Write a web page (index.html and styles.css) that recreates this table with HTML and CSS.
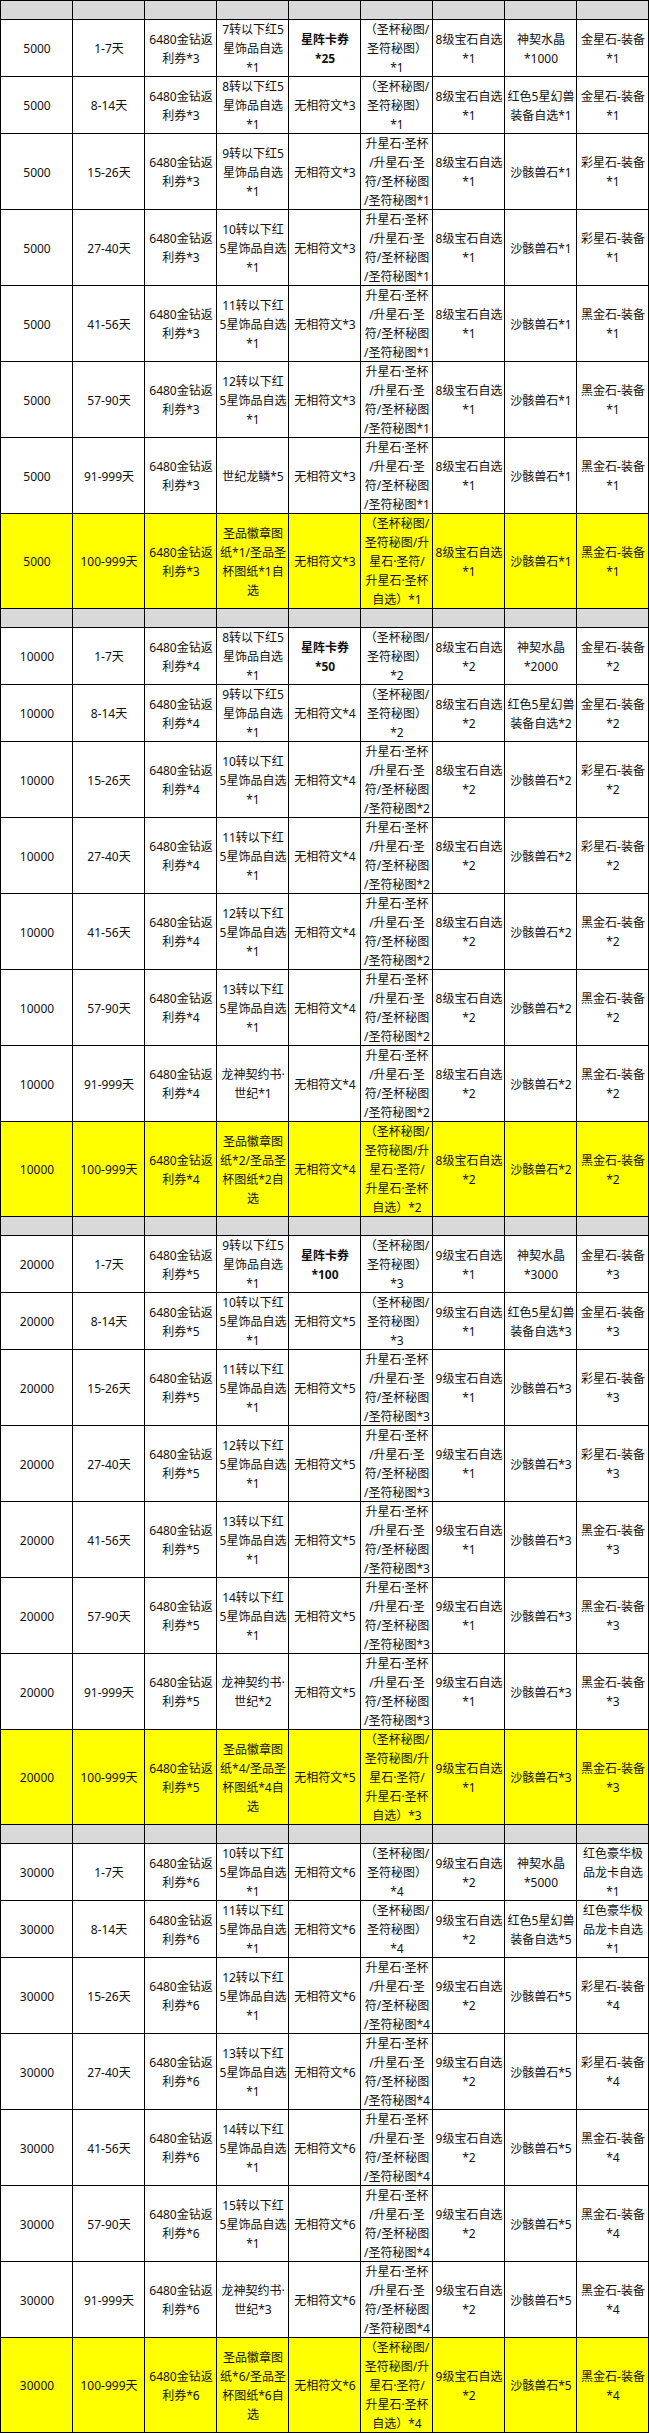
FILE: index.html
```html
<!DOCTYPE html>
<html lang="zh-CN">
<head>
<meta charset="utf-8">
<title>奖励表</title>
<link rel="stylesheet" href="styles.css">
</head>
<body>
<table class="rewards">
<tbody>
<tr class="gap"><td></td><td></td><td></td><td></td><td></td><td></td><td></td><td></td><td></td></tr>
<tr><td>5000</td><td>1-7天</td><td>6480金钻返<br>利券*3</td><td>7转以下红5<br>星饰品自选<br>*1</td><td class="b">星阵卡券<br>*25</td><td>（圣杯秘图/<br>圣符秘图）<br>*1</td><td>8级宝石自选<br>*1</td><td>神契水晶<br>*1000</td><td>金星石-装备<br>*1</td></tr>
<tr><td>5000</td><td>8-14天</td><td>6480金钻返<br>利券*3</td><td>8转以下红5<br>星饰品自选<br>*1</td><td>无相符文*3</td><td>（圣杯秘图/<br>圣符秘图）<br>*1</td><td>8级宝石自选<br>*1</td><td>红色5星幻兽<br>装备自选*1</td><td>金星石-装备<br>*1</td></tr>
<tr><td>5000</td><td>15-26天</td><td>6480金钻返<br>利券*3</td><td>9转以下红5<br>星饰品自选<br>*1</td><td>无相符文*3</td><td>升星石·圣杯<br>/升星石·圣<br>符/圣杯秘图<br>/圣符秘图*1</td><td>8级宝石自选<br>*1</td><td>沙骸兽石*1</td><td>彩星石-装备<br>*1</td></tr>
<tr><td>5000</td><td>27-40天</td><td>6480金钻返<br>利券*3</td><td>10转以下红<br>5星饰品自选<br>*1</td><td>无相符文*3</td><td>升星石·圣杯<br>/升星石·圣<br>符/圣杯秘图<br>/圣符秘图*1</td><td>8级宝石自选<br>*1</td><td>沙骸兽石*1</td><td>彩星石-装备<br>*1</td></tr>
<tr><td>5000</td><td>41-56天</td><td>6480金钻返<br>利券*3</td><td>11转以下红<br>5星饰品自选<br>*1</td><td>无相符文*3</td><td>升星石·圣杯<br>/升星石·圣<br>符/圣杯秘图<br>/圣符秘图*1</td><td>8级宝石自选<br>*1</td><td>沙骸兽石*1</td><td>黑金石-装备<br>*1</td></tr>
<tr><td>5000</td><td>57-90天</td><td>6480金钻返<br>利券*3</td><td>12转以下红<br>5星饰品自选<br>*1</td><td>无相符文*3</td><td>升星石·圣杯<br>/升星石·圣<br>符/圣杯秘图<br>/圣符秘图*1</td><td>8级宝石自选<br>*1</td><td>沙骸兽石*1</td><td>黑金石-装备<br>*1</td></tr>
<tr><td>5000</td><td>91-999天</td><td>6480金钻返<br>利券*3</td><td>世纪龙鳞*5</td><td>无相符文*3</td><td>升星石·圣杯<br>/升星石·圣<br>符/圣杯秘图<br>/圣符秘图*1</td><td>8级宝石自选<br>*1</td><td>沙骸兽石*1</td><td>黑金石-装备<br>*1</td></tr>
<tr class="hl"><td>5000</td><td>100-999天</td><td>6480金钻返<br>利券*3</td><td>圣品徽章图<br>纸*1/圣品圣<br>杯图纸*1自<br>选</td><td>无相符文*3</td><td>（圣杯秘图/<br>圣符秘图/升<br>星石·圣符/<br>升星石·圣杯<br>自选）*1</td><td>8级宝石自选<br>*1</td><td>沙骸兽石*1</td><td>黑金石-装备<br>*1</td></tr>

<tr class="gap"><td></td><td></td><td></td><td></td><td></td><td></td><td></td><td></td><td></td></tr>
<tr><td>10000</td><td>1-7天</td><td>6480金钻返<br>利券*4</td><td>8转以下红5<br>星饰品自选<br>*1</td><td class="b">星阵卡券<br>*50</td><td>（圣杯秘图/<br>圣符秘图）<br>*2</td><td>8级宝石自选<br>*2</td><td>神契水晶<br>*2000</td><td>金星石-装备<br>*2</td></tr>
<tr><td>10000</td><td>8-14天</td><td>6480金钻返<br>利券*4</td><td>9转以下红5<br>星饰品自选<br>*1</td><td>无相符文*4</td><td>（圣杯秘图/<br>圣符秘图）<br>*2</td><td>8级宝石自选<br>*2</td><td>红色5星幻兽<br>装备自选*2</td><td>金星石-装备<br>*2</td></tr>
<tr><td>10000</td><td>15-26天</td><td>6480金钻返<br>利券*4</td><td>10转以下红<br>5星饰品自选<br>*1</td><td>无相符文*4</td><td>升星石·圣杯<br>/升星石·圣<br>符/圣杯秘图<br>/圣符秘图*2</td><td>8级宝石自选<br>*2</td><td>沙骸兽石*2</td><td>彩星石-装备<br>*2</td></tr>
<tr><td>10000</td><td>27-40天</td><td>6480金钻返<br>利券*4</td><td>11转以下红<br>5星饰品自选<br>*1</td><td>无相符文*4</td><td>升星石·圣杯<br>/升星石·圣<br>符/圣杯秘图<br>/圣符秘图*2</td><td>8级宝石自选<br>*2</td><td>沙骸兽石*2</td><td>彩星石-装备<br>*2</td></tr>
<tr><td>10000</td><td>41-56天</td><td>6480金钻返<br>利券*4</td><td>12转以下红<br>5星饰品自选<br>*1</td><td>无相符文*4</td><td>升星石·圣杯<br>/升星石·圣<br>符/圣杯秘图<br>/圣符秘图*2</td><td>8级宝石自选<br>*2</td><td>沙骸兽石*2</td><td>黑金石-装备<br>*2</td></tr>
<tr><td>10000</td><td>57-90天</td><td>6480金钻返<br>利券*4</td><td>13转以下红<br>5星饰品自选<br>*1</td><td>无相符文*4</td><td>升星石·圣杯<br>/升星石·圣<br>符/圣杯秘图<br>/圣符秘图*2</td><td>8级宝石自选<br>*2</td><td>沙骸兽石*2</td><td>黑金石-装备<br>*2</td></tr>
<tr><td>10000</td><td>91-999天</td><td>6480金钻返<br>利券*4</td><td>龙神契约书·<br>世纪*1</td><td>无相符文*4</td><td>升星石·圣杯<br>/升星石·圣<br>符/圣杯秘图<br>/圣符秘图*2</td><td>8级宝石自选<br>*2</td><td>沙骸兽石*2</td><td>黑金石-装备<br>*2</td></tr>
<tr class="hl"><td>10000</td><td>100-999天</td><td>6480金钻返<br>利券*4</td><td>圣品徽章图<br>纸*2/圣品圣<br>杯图纸*2自<br>选</td><td>无相符文*4</td><td>（圣杯秘图/<br>圣符秘图/升<br>星石·圣符/<br>升星石·圣杯<br>自选）*2</td><td>8级宝石自选<br>*2</td><td>沙骸兽石*2</td><td>黑金石-装备<br>*2</td></tr>

<tr class="gap"><td></td><td></td><td></td><td></td><td></td><td></td><td></td><td></td><td></td></tr>
<tr><td>20000</td><td>1-7天</td><td>6480金钻返<br>利券*5</td><td>9转以下红5<br>星饰品自选<br>*1</td><td class="b">星阵卡券<br>*100</td><td>（圣杯秘图/<br>圣符秘图）<br>*3</td><td>9级宝石自选<br>*1</td><td>神契水晶<br>*3000</td><td>金星石-装备<br>*3</td></tr>
<tr><td>20000</td><td>8-14天</td><td>6480金钻返<br>利券*5</td><td>10转以下红<br>5星饰品自选<br>*1</td><td>无相符文*5</td><td>（圣杯秘图/<br>圣符秘图）<br>*3</td><td>9级宝石自选<br>*1</td><td>红色5星幻兽<br>装备自选*3</td><td>金星石-装备<br>*3</td></tr>
<tr><td>20000</td><td>15-26天</td><td>6480金钻返<br>利券*5</td><td>11转以下红<br>5星饰品自选<br>*1</td><td>无相符文*5</td><td>升星石·圣杯<br>/升星石·圣<br>符/圣杯秘图<br>/圣符秘图*3</td><td>9级宝石自选<br>*1</td><td>沙骸兽石*3</td><td>彩星石-装备<br>*3</td></tr>
<tr><td>20000</td><td>27-40天</td><td>6480金钻返<br>利券*5</td><td>12转以下红<br>5星饰品自选<br>*1</td><td>无相符文*5</td><td>升星石·圣杯<br>/升星石·圣<br>符/圣杯秘图<br>/圣符秘图*3</td><td>9级宝石自选<br>*1</td><td>沙骸兽石*3</td><td>彩星石-装备<br>*3</td></tr>
<tr><td>20000</td><td>41-56天</td><td>6480金钻返<br>利券*5</td><td>13转以下红<br>5星饰品自选<br>*1</td><td>无相符文*5</td><td>升星石·圣杯<br>/升星石·圣<br>符/圣杯秘图<br>/圣符秘图*3</td><td>9级宝石自选<br>*1</td><td>沙骸兽石*3</td><td>黑金石-装备<br>*3</td></tr>
<tr><td>20000</td><td>57-90天</td><td>6480金钻返<br>利券*5</td><td>14转以下红<br>5星饰品自选<br>*1</td><td>无相符文*5</td><td>升星石·圣杯<br>/升星石·圣<br>符/圣杯秘图<br>/圣符秘图*3</td><td>9级宝石自选<br>*1</td><td>沙骸兽石*3</td><td>黑金石-装备<br>*3</td></tr>
<tr><td>20000</td><td>91-999天</td><td>6480金钻返<br>利券*5</td><td>龙神契约书·<br>世纪*2</td><td>无相符文*5</td><td>升星石·圣杯<br>/升星石·圣<br>符/圣杯秘图<br>/圣符秘图*3</td><td>9级宝石自选<br>*1</td><td>沙骸兽石*3</td><td>黑金石-装备<br>*3</td></tr>
<tr class="hl"><td>20000</td><td>100-999天</td><td>6480金钻返<br>利券*5</td><td>圣品徽章图<br>纸*4/圣品圣<br>杯图纸*4自<br>选</td><td>无相符文*5</td><td>（圣杯秘图/<br>圣符秘图/升<br>星石·圣符/<br>升星石·圣杯<br>自选）*3</td><td>9级宝石自选<br>*1</td><td>沙骸兽石*3</td><td>黑金石-装备<br>*3</td></tr>

<tr class="gap"><td></td><td></td><td></td><td></td><td></td><td></td><td></td><td></td><td></td></tr>
<tr><td>30000</td><td>1-7天</td><td>6480金钻返<br>利券*6</td><td>10转以下红<br>5星饰品自选<br>*1</td><td>无相符文*6</td><td>（圣杯秘图/<br>圣符秘图）<br>*4</td><td>9级宝石自选<br>*2</td><td>神契水晶<br>*5000</td><td>红色豪华极<br>品龙卡自选<br>*1</td></tr>
<tr><td>30000</td><td>8-14天</td><td>6480金钻返<br>利券*6</td><td>11转以下红<br>5星饰品自选<br>*1</td><td>无相符文*6</td><td>（圣杯秘图/<br>圣符秘图）<br>*4</td><td>9级宝石自选<br>*2</td><td>红色5星幻兽<br>装备自选*5</td><td>红色豪华极<br>品龙卡自选<br>*1</td></tr>
<tr><td>30000</td><td>15-26天</td><td>6480金钻返<br>利券*6</td><td>12转以下红<br>5星饰品自选<br>*1</td><td>无相符文*6</td><td>升星石·圣杯<br>/升星石·圣<br>符/圣杯秘图<br>/圣符秘图*4</td><td>9级宝石自选<br>*2</td><td>沙骸兽石*5</td><td>彩星石-装备<br>*4</td></tr>
<tr><td>30000</td><td>27-40天</td><td>6480金钻返<br>利券*6</td><td>13转以下红<br>5星饰品自选<br>*1</td><td>无相符文*6</td><td>升星石·圣杯<br>/升星石·圣<br>符/圣杯秘图<br>/圣符秘图*4</td><td>9级宝石自选<br>*2</td><td>沙骸兽石*5</td><td>彩星石-装备<br>*4</td></tr>
<tr><td>30000</td><td>41-56天</td><td>6480金钻返<br>利券*6</td><td>14转以下红<br>5星饰品自选<br>*1</td><td>无相符文*6</td><td>升星石·圣杯<br>/升星石·圣<br>符/圣杯秘图<br>/圣符秘图*4</td><td>9级宝石自选<br>*2</td><td>沙骸兽石*5</td><td>黑金石-装备<br>*4</td></tr>
<tr><td>30000</td><td>57-90天</td><td>6480金钻返<br>利券*6</td><td>15转以下红<br>5星饰品自选<br>*1</td><td>无相符文*6</td><td>升星石·圣杯<br>/升星石·圣<br>符/圣杯秘图<br>/圣符秘图*4</td><td>9级宝石自选<br>*2</td><td>沙骸兽石*5</td><td>黑金石-装备<br>*4</td></tr>
<tr><td>30000</td><td>91-999天</td><td>6480金钻返<br>利券*6</td><td>龙神契约书·<br>世纪*3</td><td>无相符文*6</td><td>升星石·圣杯<br>/升星石·圣<br>符/圣杯秘图<br>/圣符秘图*4</td><td>9级宝石自选<br>*2</td><td>沙骸兽石*5</td><td>黑金石-装备<br>*4</td></tr>
<tr class="hl"><td>30000</td><td>100-999天</td><td>6480金钻返<br>利券*6</td><td>圣品徽章图<br>纸*6/圣品圣<br>杯图纸*6自<br>选</td><td>无相符文*6</td><td>（圣杯秘图/<br>圣符秘图/升<br>星石·圣符/<br>升星石·圣杯<br>自选）*4</td><td>9级宝石自选<br>*2</td><td>沙骸兽石*5</td><td>黑金石-装备<br>*4</td></tr>
</tbody>
</table>
</body>
</html>
```
FILE: styles.css
```css
html, body {
  margin: 0;
  padding: 0;
  background: #ffffff;
}

.rewards {
  width: 649px;
  table-layout: fixed;
  border-collapse: separate;
  border-spacing: 0;
  border-top: 1px solid #000;
  border-left: 1px solid #000;
  font-family: "Noto Sans", "Noto Sans CJK SC", "Microsoft YaHei", sans-serif;
  font-size: 12px;
  line-height: 19px;
  color: #111;
}

.rewards td {
  padding: 0;
  text-align: center;
  vertical-align: middle;
  white-space: nowrap;
  overflow: visible;
  box-shadow: inset -1px -1px 0 #000;
  background: #ffffff;
}

.rewards .gap td {
  height: 19px;
  background: #d9d9d9;
}

.rewards .hl td {
  background: #ffff00;
}

.rewards td.b {
  font-weight: 700;
}
```
